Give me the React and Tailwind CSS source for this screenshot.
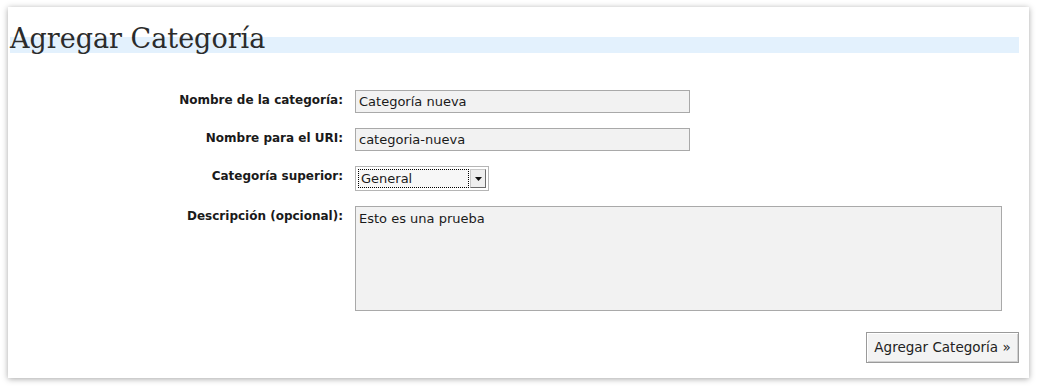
import React from 'react';

const fields = [
  { label: 'Nombre de la categoría:', value: 'Categoría nueva' },
  { label: 'Nombre para el URI:', value: 'categoria-nueva' },
];

function Label({ children }) {
  return (
    <div className="w-[333px] shrink-0 pt-[2px] text-right text-[12px] font-bold text-[#1a1a1a] leading-[16px]">
      {children}
    </div>
  );
}

export default function App() {
  return (
    <div className="h-[386px] w-[1037px] bg-white font-['DejaVu_Sans',sans-serif] pl-[8px] pt-[7px]">
      {/* main panel */}
      <div className="h-[371px] w-[1021px] bg-white shadow-[0_1px_6px_rgba(0,0,0,0.35)] pl-[2px] pr-[10px] pt-[14px]">
        <h1 className="h-[40px] bg-[linear-gradient(to_bottom,transparent_16px,#e3f1fd_16px,#e3f1fd_32px,transparent_32px)] font-['DejaVu_Serif',serif] text-[27px] leading-[36px] text-[#2b2b2b]">
          Agregar Categoría
        </h1>

        <div className="mt-[29px] flex flex-col">
          {fields.map((f) => (
            <div key={f.label} className="mb-[15px] flex items-start">
              <Label>{f.label}</Label>
              <div className="ml-[12px] h-[23px] w-[335px] border border-[#a9a9a9] bg-[#f2f2f2] px-[3px] text-[13px] leading-[21px] text-[#1a1a1a]">
                {f.value}
              </div>
            </div>
          ))}

          <div className="mb-[15px] flex items-start">
            <Label>Categoría superior:</Label>
            <div className="ml-[12px] flex h-[25px] w-[134px] items-center border border-[#b5b5b5] bg-white p-[2px]">
              <div className="flex h-full flex-1 items-center border border-dotted border-black bg-[#f7f7f7] px-[2px] text-[13px] text-[#1a1a1a]">
                General
              </div>
              <div className="ml-[1px] flex h-full w-[16px] items-center justify-center border border-[#c8c8c8] border-b-[#6b6b6b] border-r-[#6b6b6b] bg-[#efefef]">
                <svg width="7" height="4" viewBox="0 0 7 4">
                  <path d="M0 0h7L3.5 4z" fill="#111" />
                </svg>
              </div>
            </div>
          </div>

          <div className="flex items-start">
            <Label>Descripción (opcional):</Label>
            <div className="ml-[12px] h-[105px] w-[647px] border border-[#a9a9a9] bg-[#f2f2f2] px-[3px] pt-[4px] text-[13px] leading-[16px] text-[#1a1a1a]">
              Esto es una prueba
            </div>
          </div>

          <div className="mt-[21px] flex justify-end">
            <button className="h-[31px] w-[153px] border border-[#9a9a9a] bg-[#f3f3f3] shadow-[inset_1px_1px_0_#fff,inset_-1px_-1px_0_#d0d0d0] text-[13.5px] text-[#222]">
              Agregar Categoría »
            </button>
          </div>
        </div>
      </div>
    </div>
  );
}
